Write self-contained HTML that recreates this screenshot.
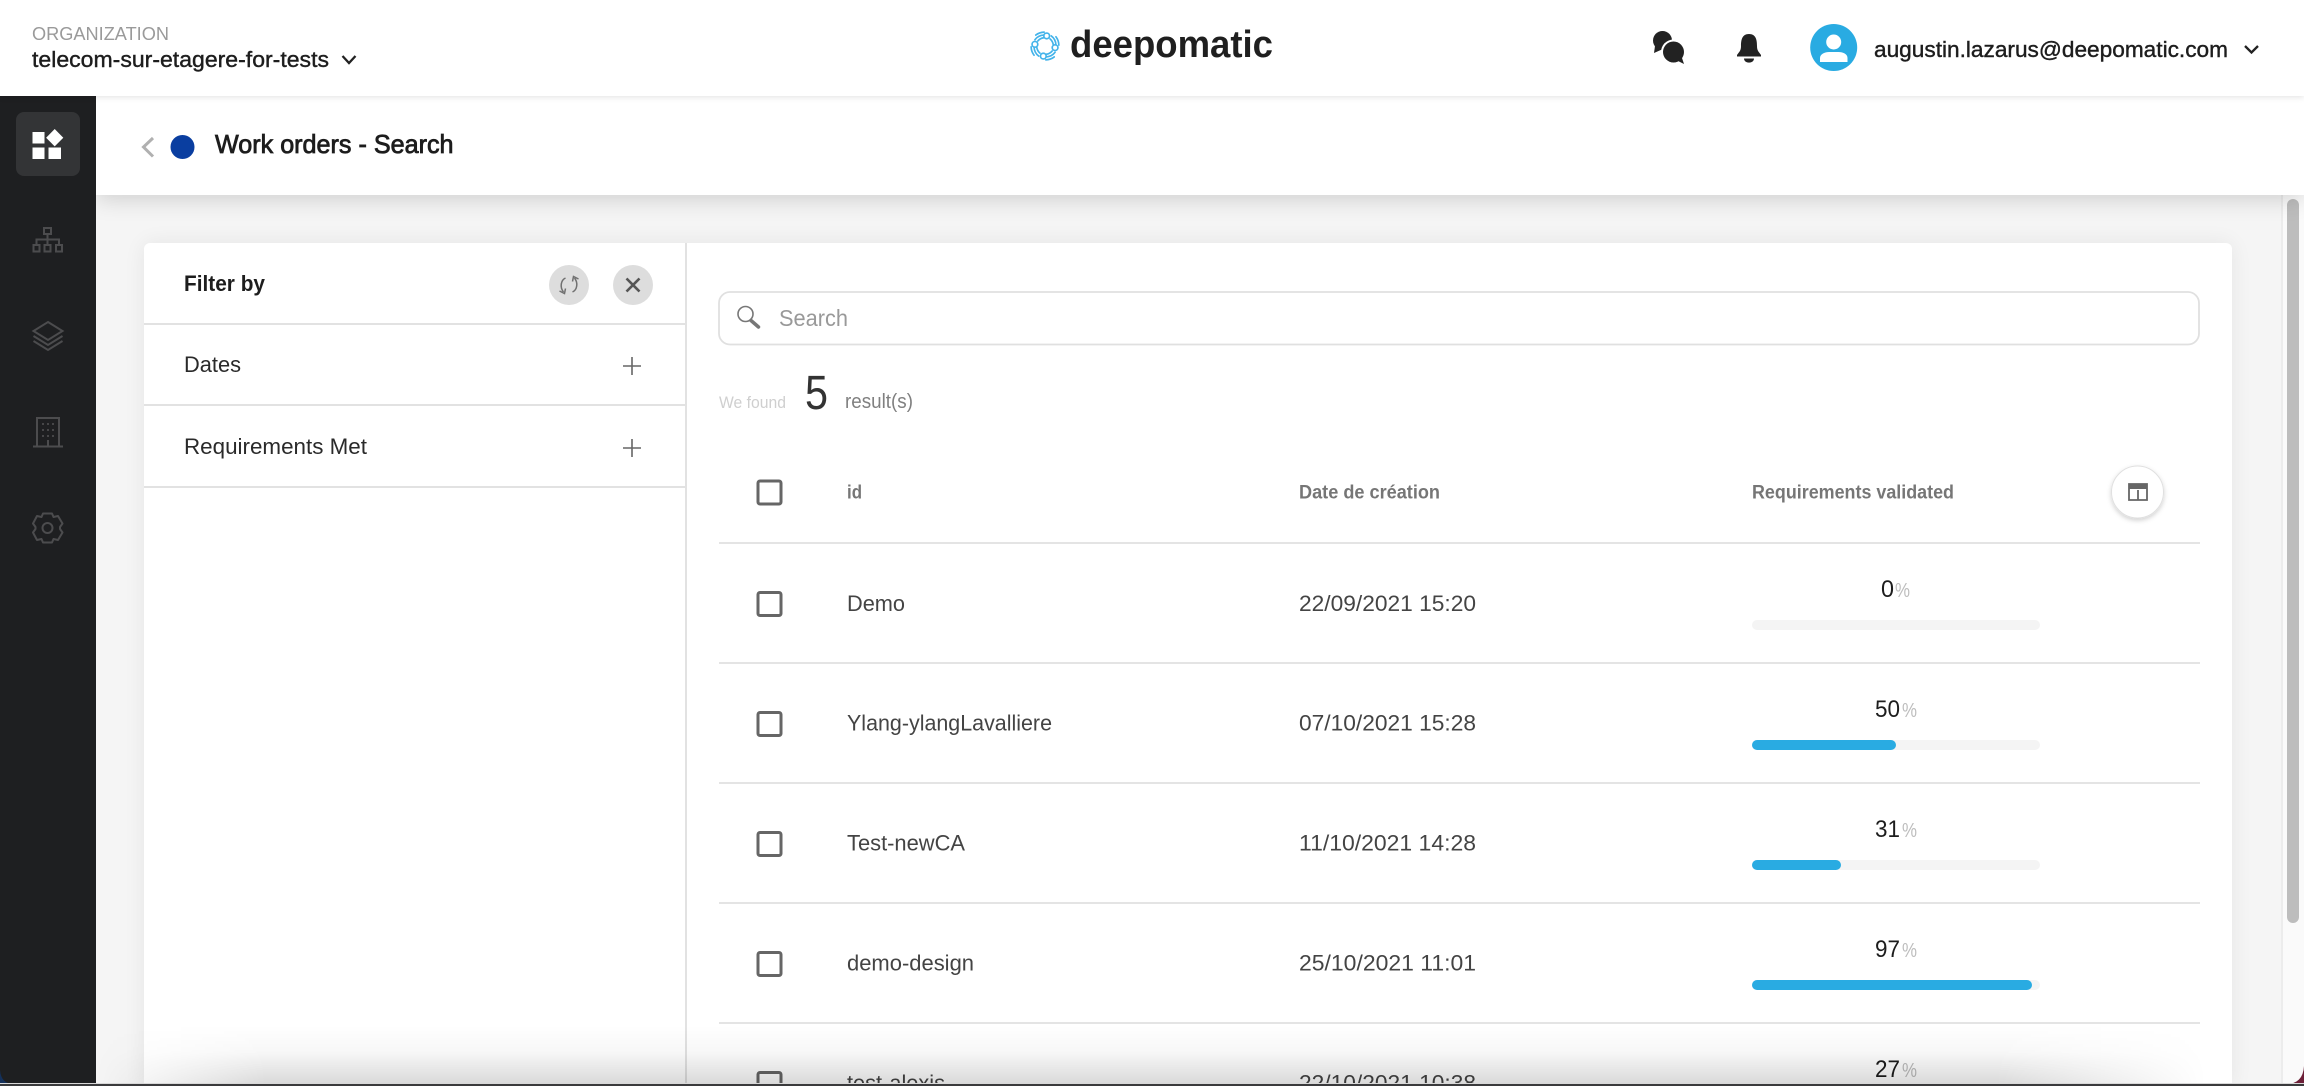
<!DOCTYPE html>
<html lang="en">
<head>
<meta charset="utf-8">
<title>Work orders - Search</title>
<style>
html,body{margin:0;padding:0;width:2304px;height:1086px;overflow:hidden;background:#f5f5f5;font-family:"Liberation Sans",sans-serif}
#root{position:absolute;left:0;top:0;width:2304px;height:1086px;overflow:hidden;background:#f5f5f5;contain:paint}
.b{position:absolute}
svg{position:absolute;left:0;top:0}
text{font-family:"Liberation Sans",sans-serif}
</style>
</head>
<body>
<div id="root">
<div class="b" style="left:144px;top:243px;width:2088px;height:843px;background:#fff;border-radius:6px 6px 0 0;box-shadow:0 0 22px rgba(0,0,0,.07);clip-path:inset(-30px -30px 0 -30px)"></div>
<div class="b" style="left:2281px;top:195px;width:23px;height:891px;background:#fafafa;border-left:2px solid #ececec;box-sizing:border-box"></div>
<div class="b" style="left:2287px;top:199px;width:12px;height:724px;background:#bdbdbd;border-radius:6px"></div>
<div class="b" style="left:96px;top:96px;width:2208px;height:99px;background:#fff;box-shadow:0 4px 22px rgba(0,0,0,.16)"></div>
<div class="b" style="left:0;top:96px;width:96px;height:990px;background:#1e1f21"></div>
<div class="b" style="left:16px;top:112px;width:64px;height:64px;background:#333436;border-radius:8px"></div>
<div class="b" style="left:0;top:0;width:2304px;height:96px;background:#fff;box-shadow:0 1px 6px rgba(0,0,0,.12)"></div>

<svg width="2304" height="1086" viewBox="0 0 2304 1086" xmlns="http://www.w3.org/2000/svg">
<!-- header -->
<text x="32" y="40" font-size="18" fill="#9a9a9a" textLength="137" lengthAdjust="spacingAndGlyphs">ORGANIZATION</text>
<text x="32" y="67" font-size="22" fill="#1d1d1d" stroke="#1d1d1d" stroke-width=".4" textLength="297" lengthAdjust="spacingAndGlyphs">telecom-sur-etagere-for-tests</text>
<path d="M342.500 56 L349 63 L355.500 56" fill="none" stroke="#222" stroke-width="2.300"/>

<!-- logo -->
<g fill="none" stroke="#43b3ea" stroke-width="2" stroke-linecap="round">
 <g transform="translate(1045 46) scale(.84)">
  <circle cx="2" cy="-12" r="3.400"/>
  <path d="M-1.500 -13 A14 14 0 0 0 -12 -7.500"/>
  <path d="M-1 -16.500 A17 17 0 0 0 -11 -13"/>
  <path d="M-1.500 -9.800 A11 11 0 0 0 -8.500 -6"/>
 </g>
 <g transform="translate(1045 46) rotate(90) scale(.84)">
  <circle cx="2" cy="-12" r="3.400"/>
  <path d="M-1.500 -13 A14 14 0 0 0 -12 -7.500"/>
  <path d="M-1 -16.500 A17 17 0 0 0 -11 -13"/>
  <path d="M-1.500 -9.800 A11 11 0 0 0 -8.500 -6"/>
 </g>
 <g transform="translate(1045 46) rotate(180) scale(.84)">
  <circle cx="2" cy="-12" r="3.400"/>
  <path d="M-1.500 -13 A14 14 0 0 0 -12 -7.500"/>
  <path d="M-1 -16.500 A17 17 0 0 0 -11 -13"/>
  <path d="M-1.500 -9.800 A11 11 0 0 0 -8.500 -6"/>
 </g>
 <g transform="translate(1045 46) rotate(270) scale(.84)">
  <circle cx="2" cy="-12" r="3.400"/>
  <path d="M-1.500 -13 A14 14 0 0 0 -12 -7.500"/>
  <path d="M-1 -16.500 A17 17 0 0 0 -11 -13"/>
  <path d="M-1.500 -9.800 A11 11 0 0 0 -8.500 -6"/>
 </g>
</g>
<text x="1070" y="57" font-size="38" font-weight="bold" fill="#1f1f1f" textLength="203" lengthAdjust="spacingAndGlyphs">deepomatic</text>

<!-- chat -->
<g fill="#222">
 <circle cx="1662.500" cy="40.500" r="9.500"/>
 <path d="M1655 46 L1654 53 L1663 49 Z"/>
 <circle cx="1673.500" cy="52" r="12.500" fill="#fff"/>
 <circle cx="1673.500" cy="52" r="10.500"/>
 <path d="M1676 60 L1684 64 L1681 55 Z"/>
</g>
<!-- bell -->
<path d="M1749 34 C1756 34 1757 40 1757 46 C1757 51 1759 52 1761 55 L1761 56.500 L1737 56.500 L1737 55 C1739 52 1741 51 1741 46 C1741 40 1742 34 1749 34 Z" fill="#222"/>
<path d="M1744 58.500 L1754 58.500 C1754 64 1744 64 1744 58.500 Z" fill="#222"/>
<!-- avatar -->
<circle cx="1833.700" cy="47.500" r="23.500" fill="#29abe2"/>
<circle cx="1833.700" cy="42" r="7.500" fill="#fff"/>
<path d="M1820 62 L1820 58 C1820 54 1825 52 1829 52 L1838.500 52 C1843 52 1847.500 54 1847.500 58 L1847.500 62 Z" fill="#fff"/>
<text x="1874" y="57" font-size="22" fill="#1d1d1d" stroke="#1d1d1d" stroke-width=".4" textLength="354" lengthAdjust="spacingAndGlyphs">augustin.lazarus@deepomatic.com</text>
<path d="M2245 46 L2251.500 52.500 L2258 46" fill="none" stroke="#222" stroke-width="2.300"/>

<!-- sidebar icons -->
<g fill="#fff">
 <rect x="32.500" y="132" width="12" height="11.500"/>
 <rect x="32.500" y="147.500" width="12" height="11.500"/>
 <rect x="48.500" y="147.500" width="12.500" height="11.500"/>
 <path d="M54.700 129 L63.300 137.700 L54.700 146.400 L46.100 137.700 Z"/>
</g>
<g fill="none" stroke="#4c4c4e" stroke-width="2">
 <rect x="44" y="228" width="7" height="6"/>
 <rect x="33.500" y="245" width="6" height="6.500"/>
 <rect x="44.500" y="245" width="6" height="6.500"/>
 <rect x="56" y="245" width="6" height="6.500"/>
 <path d="M47.500 234 V245 M36.500 245 V239.500 H59 V245"/>
 <path d="M48 322 L62.500 331 L48 340 L33.500 331 Z"/>
 <path d="M33.500 336 L48 345 L62.500 336 M33.500 341 L48 350 L62.500 341"/>
 <path d="M37 447 V418 H59 V447 M33 446.500 H63 M48 440 V447"/>
 <path d="M42 424h2M47 424h2M52 424h2M42 430h2M47 430h2M52 430h2M42 436h2M47 436h2M52 436h2" stroke-width="1.800"/>
 <circle cx="47.500" cy="528" r="5"/>
 <path d="M43 513.500 H52 L53.500 517 L58 516 L62.500 523.500 L60 527 L60 529 L62.500 532.500 L58 540 L53.500 539 L52 542.500 H43 L41.500 539 L37 540 L33 532.500 L35.500 529 L35.500 527 L33 523.500 L37 516 L41.500 517 Z" stroke-linejoin="round"/>
</g>

<!-- sub header -->
<path d="M153 138 L143.500 147 L153 156.500" fill="none" stroke="#b0b0b0" stroke-width="3"/>
<circle cx="182.500" cy="147" r="12" fill="#0a3ea0"/>
<text x="215" y="153" font-size="26" fill="#1d1d1d" stroke="#1d1d1d" stroke-width=".8" textLength="238.500" lengthAdjust="spacingAndGlyphs">Work orders - Search</text>

<!-- filter panel -->
<rect x="685" y="243" width="2" height="843" fill="#e2e2e2"/>
<rect x="144" y="323" width="541" height="2" fill="#e2e2e2"/>
<rect x="144" y="404" width="541" height="2" fill="#e2e2e2"/>
<rect x="144" y="486" width="541" height="2" fill="#e2e2e2"/>
<text x="184" y="291" font-size="22" font-weight="bold" fill="#1d1d1d" textLength="81" lengthAdjust="spacingAndGlyphs">Filter by</text>
<circle cx="569" cy="285" r="20" fill="#dddddd"/>
<circle cx="633" cy="285" r="20" fill="#dddddd"/>
<g fill="none" stroke="#707070" stroke-width="1.500">
 <path d="M565.500 278 C561 280 559.500 287 563.500 292"/>
 <path d="M559.500 291 L564.500 293.500 L565.500 288.500"/>
 <path d="M572.500 292 C577 290 578.500 283 574.500 278"/>
 <path d="M578.500 279 L573.500 276.500 L572.500 281.500"/>
</g>
<path d="M626.500 278.500 L639.500 291.500 M639.500 278.500 L626.500 291.500" stroke="#555" stroke-width="2.600" fill="none"/>
<text x="184" y="372" font-size="22" fill="#2a2a2a" textLength="57" lengthAdjust="spacingAndGlyphs">Dates</text>
<text x="184" y="454" font-size="22" fill="#2a2a2a" textLength="183" lengthAdjust="spacingAndGlyphs">Requirements Met</text>
<path d="M623 366 H641 M632 357 V375 M623 448 H641 M632 439 V457" stroke="#666" stroke-width="1.600" fill="none"/>

<!-- search -->
<rect x="719" y="292" width="1480" height="52.500" rx="11" fill="#fff" stroke="#e0e0e0" stroke-width="1.800"/>
<circle cx="745.500" cy="314" r="7.500" fill="none" stroke="#777" stroke-width="1.600"/>
<path d="M751 320.500 L758.500 327" stroke="#777" stroke-width="3.500" stroke-linecap="round"/>
<text x="779" y="326" font-size="23" fill="#999" textLength="69" lengthAdjust="spacingAndGlyphs">Search</text>

<text x="719" y="408" font-size="17" fill="#cfcfcf" textLength="67" lengthAdjust="spacingAndGlyphs">We found</text>
<text x="805" y="409" font-size="48" fill="#333" textLength="23" lengthAdjust="spacingAndGlyphs">5</text>
<text x="845" y="408" font-size="20" fill="#808080" textLength="68" lengthAdjust="spacingAndGlyphs">result(s)</text>

<!-- table head -->
<rect x="758" y="481" width="23" height="23" rx="2" fill="none" stroke="#666" stroke-width="3"/>
<text x="847" y="498.500" font-size="19" font-weight="bold" fill="#767676" textLength="15" lengthAdjust="spacingAndGlyphs">id</text>
<text x="1299" y="498.500" font-size="19" font-weight="bold" fill="#767676" textLength="141" lengthAdjust="spacingAndGlyphs">Date de création</text>
<text x="1752" y="498.500" font-size="19" font-weight="bold" fill="#767676" textLength="202" lengthAdjust="spacingAndGlyphs">Requirements validated</text>
<defs><filter id="s" x="-30%" y="-30%" width="160%" height="170%"><feDropShadow dx="0" dy="2" stdDeviation="2.500" flood-color="#000" flood-opacity=".18"/></filter></defs>
<circle cx="2137.500" cy="492" r="26" fill="#fff" stroke="#e0e0e0" stroke-width="1" filter="url(#s)"/>
<path d="M2129 484 H2147 V500 H2129 Z M2138 490 V500" fill="none" stroke="#666" stroke-width="1.800"/>
<rect x="2129" y="484" width="18" height="5" fill="#666"/>

<!-- rows -->
<g fill="#e4e4e4">
 <rect x="719" y="542" width="1481" height="2"/>
 <rect x="719" y="662" width="1481" height="2"/>
 <rect x="719" y="782" width="1481" height="2"/>
 <rect x="719" y="902" width="1481" height="2"/>
 <rect x="719" y="1022" width="1481" height="2"/>
</g>
<g fill="none" stroke="#666" stroke-width="3">
 <rect x="758" y="592.500" width="23" height="23" rx="2"/>
 <rect x="758" y="712.500" width="23" height="23" rx="2"/>
 <rect x="758" y="832.500" width="23" height="23" rx="2"/>
 <rect x="758" y="952.500" width="23" height="23" rx="2"/>
 <rect x="758" y="1072.500" width="23" height="23" rx="2"/>
</g>
<g font-size="22" fill="#444">
 <text x="847" y="611" textLength="58" lengthAdjust="spacingAndGlyphs">Demo</text>
 <text x="847" y="730.500" textLength="205" lengthAdjust="spacingAndGlyphs">Ylang-ylangLavalliere</text>
 <text x="847" y="850.500" textLength="118" lengthAdjust="spacingAndGlyphs">Test-newCA</text>
 <text x="847" y="970.500" textLength="127" lengthAdjust="spacingAndGlyphs">demo-design</text>
 <text x="847" y="1090.500" textLength="98" lengthAdjust="spacingAndGlyphs">test-alexis</text>
 <text x="1299" y="611" textLength="177" lengthAdjust="spacingAndGlyphs">22/09/2021 15:20</text>
 <text x="1299" y="730.500" textLength="177" lengthAdjust="spacingAndGlyphs">07/10/2021 15:28</text>
 <text x="1299" y="850.500" textLength="177" lengthAdjust="spacingAndGlyphs">11/10/2021 14:28</text>
 <text x="1299" y="970.500" textLength="177" lengthAdjust="spacingAndGlyphs">25/10/2021 11:01</text>
 <text x="1299" y="1090.500" textLength="177" lengthAdjust="spacingAndGlyphs">22/10/2021 10:38</text>
</g>
<g font-size="24" fill="#1d1d1d">
 <text x="1881" y="597" textLength="13" lengthAdjust="spacingAndGlyphs">0</text>
 <text x="1875" y="717" textLength="25" lengthAdjust="spacingAndGlyphs">50</text>
 <text x="1875" y="837" textLength="25" lengthAdjust="spacingAndGlyphs">31</text>
 <text x="1875" y="957" textLength="25" lengthAdjust="spacingAndGlyphs">97</text>
 <text x="1875" y="1077" textLength="25" lengthAdjust="spacingAndGlyphs">27</text>
</g>
<g font-size="20" fill="#bdbdbd">
 <text x="1895" y="597" textLength="15" lengthAdjust="spacingAndGlyphs">%</text>
 <text x="1902" y="717" textLength="15" lengthAdjust="spacingAndGlyphs">%</text>
 <text x="1902" y="837" textLength="15" lengthAdjust="spacingAndGlyphs">%</text>
 <text x="1902" y="957" textLength="15" lengthAdjust="spacingAndGlyphs">%</text>
 <text x="1902" y="1077" textLength="15" lengthAdjust="spacingAndGlyphs">%</text>
</g>
<g fill="#f4f4f4">
 <rect x="1752" y="620" width="288" height="10" rx="5"/>
 <rect x="1752" y="740" width="288" height="10" rx="5"/>
 <rect x="1752" y="860" width="288" height="10" rx="5"/>
 <rect x="1752" y="980" width="288" height="10" rx="5"/>
</g>
<g fill="#29abe2">
 <rect x="1752" y="740" width="144" height="10" rx="5"/>
 <rect x="1752" y="860" width="89" height="10" rx="5"/>
 <rect x="1752" y="980" width="280" height="10" rx="5"/>
</g>
</svg>

<!-- bottom fade -->
<div class="b" style="left:96px;top:1026px;width:2110px;height:58px;background:linear-gradient(180deg,rgba(0,0,0,0) 0,rgba(0,0,0,.03) 45%,rgba(0,0,0,.15) 100%);-webkit-mask-image:linear-gradient(90deg,transparent 0,#000 170px,#000 1900px,transparent 100%);mask-image:linear-gradient(90deg,transparent 0,#000 170px,#000 1900px,transparent 100%)"></div>

<!-- window edge -->
<svg width="2304" height="1086" viewBox="0 0 2304 1086" xmlns="http://www.w3.org/2000/svg">
<path d="M0 1070 Q1 1084 14 1084 L0 1086 Z" fill="#14305a"/>
<path d="M2304 1066 Q2303 1084 2286 1084 L2304 1086 Z" fill="#6d2038"/>
<rect x="0" y="1083" width="2304" height="1" fill="#d8d8d8"/>
<rect x="0" y="1084" width="2304" height="2" fill="#3a3a3c"/>
</svg>
</div>
</body>
</html>
